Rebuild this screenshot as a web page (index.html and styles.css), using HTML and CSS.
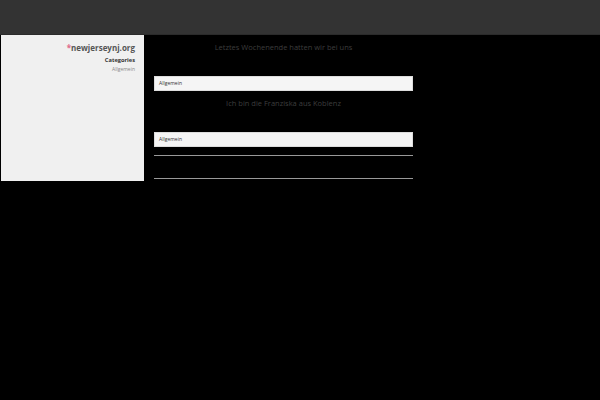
FILE: index.html
```html
<!DOCTYPE html>
<html lang="de">
<head>
<meta charset="utf-8">
<title>newjerseynj.org</title>
<link rel="stylesheet" href="styles.css">
</head>
<body>
<header class="topbar"></header>
<div class="layout">
  <aside class="sidebar">
    <h1 class="site-title"><span class="star">*</span>newjerseynj.org</h1>
    <h3 class="cat-head">Categories</h3>
    <a class="cat-link" href="#">Allgemein</a>
  </aside>
  <main class="content">
    <article class="post">
      <h2 class="post-title">Letztes Wochenende hatten wir bei uns</h2>
      <div class="post-meta">Allgemein</div>
    </article>
    <article class="post">
      <h2 class="post-title">Ich bin die Franziska aus Koblenz</h2>
      <div class="post-meta">Allgemein</div>
    </article>
    <hr class="rule rule-first">
    <hr class="rule rule-second">
  </main>
</div>
</body>
</html>
```
FILE: styles.css
```css
html, body {
  margin: 0;
  padding: 0;
  background: #000;
  font-family: "Open Sans", "DejaVu Sans", sans-serif;
}
.topbar {
  height: 34px;
  background: #333;
  border-bottom: 1px solid #2b2b2b;
}
.layout {
  display: flex;
  align-items: flex-start;
}
.sidebar {
  margin-left: 1px;
  width: 134px;
  height: 146px;
  padding-right: 9px;
  background: #f0f0f0;
  display: flex;
  flex-direction: column;
  align-items: flex-end;
}
.site-title {
  margin: 7px 0 0;
  font-size: 8px;
  line-height: 12px;
  font-weight: bold;
  color: #555;
}
.star {
  color: #e06a8a;
}
.cat-head {
  margin: 1px 0 0;
  font-size: 5.7px;
  line-height: 10px;
  font-weight: bold;
  color: #333;
}
.cat-link {
  font-size: 5px;
  line-height: 8px;
  color: #888;
  text-decoration: none;
}
.content {
  margin-left: 10px;
  width: 259px;
  padding-top: 6px;
}
.post-title {
  margin: 0 0 23px;
  font-size: 7.5px;
  line-height: 12px;
  font-weight: normal;
  text-align: center;
  color: #3d3d3d;
}
.post-meta {
  height: 15px;
  box-sizing: border-box;
  background: #f5f5f5;
  border: 1px solid #ddd;
  font-size: 5px;
  line-height: 13px;
  padding-left: 4px;
  color: #333;
  margin-bottom: 6px;
}
.rule {
  margin: 0;
  border: 0;
  height: 1px;
  background: #999;
}
.rule-first {
  margin-top: 8px;
}
.rule-second {
  margin-top: 22px;
}
```
